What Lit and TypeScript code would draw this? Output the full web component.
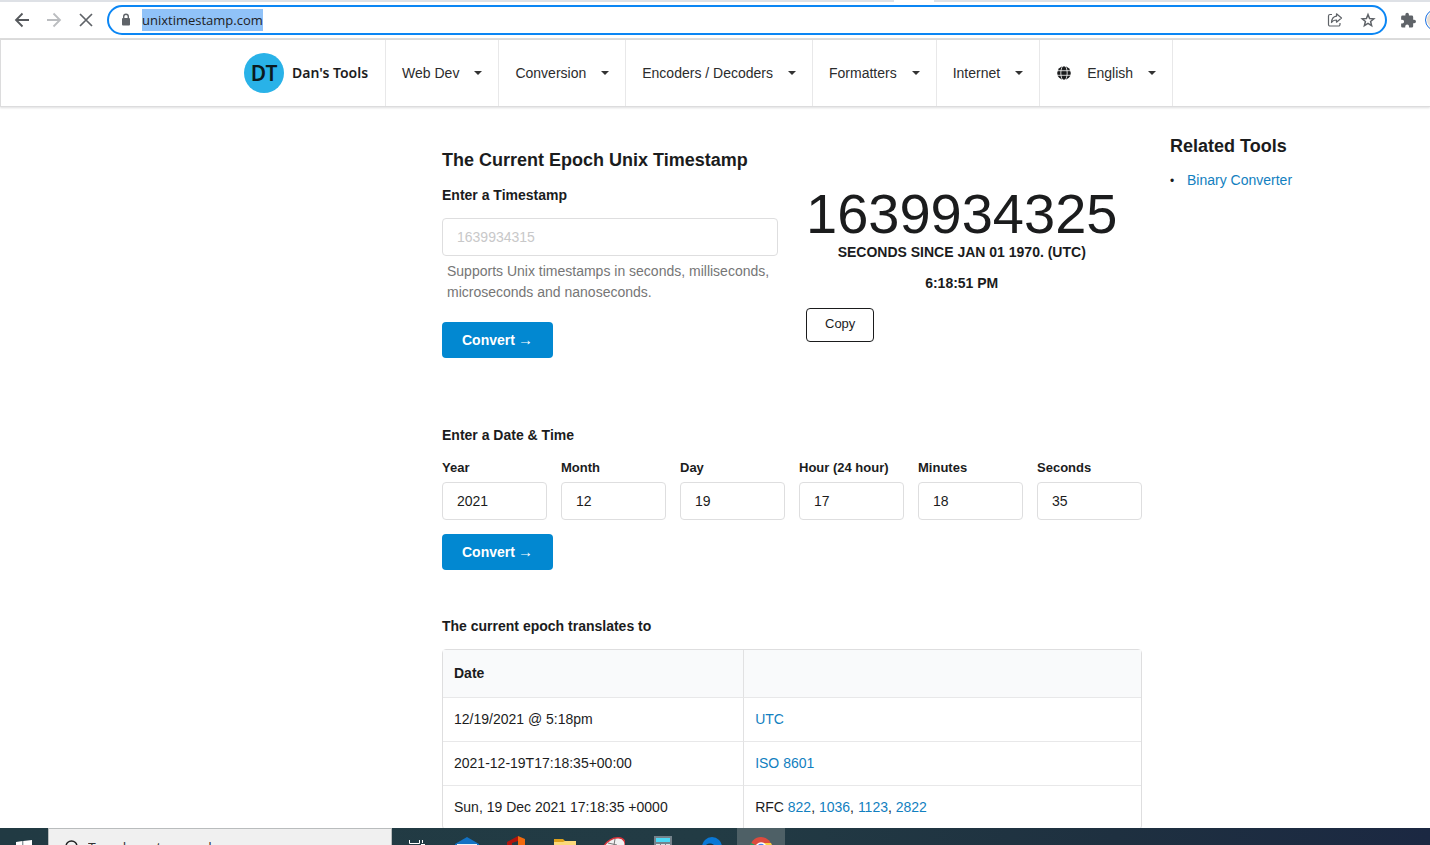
import { LitElement, html, css, svg } from "lit";
import { customElement } from "lit/decorators.js";

const MENUS = ["Web Dev", "Conversion", "Encoders / Decoders", "Formatters", "Internet"];

const FIELDS = [
  { id: "year", label: "Year", value: "2021" },
  { id: "month", label: "Month", value: "12" },
  { id: "day", label: "Day", value: "19" },
  { id: "hour", label: "Hour (24 hour)", value: "17" },
  { id: "minutes", label: "Minutes", value: "18" },
  { id: "seconds", label: "Seconds", value: "35" },
];

const ROWS = [
  { date: "12/19/2021 @ 5:18pm", format: html`<a href="#">UTC</a>` },
  { date: "2021-12-19T17:18:35+00:00", format: html`<a href="#">ISO 8601</a>` },
  {
    date: "Sun, 19 Dec 2021 17:18:35 +0000",
    format: html`RFC <a href="#">822</a>, <a href="#">1036</a>, <a href="#">1123</a>, <a href="#">2822</a>`,
  },
];

@customElement("browser-bar")
class BrowserBar extends LitElement {
  static styles = css`
    :host {
      display: flex;
      align-items: center;
      flex: none;
      height: 36px;
      gap: 8px;
      padding-top: 2px;
      padding-left: 10px;
      overflow: hidden;
      border-bottom: 2px solid #dcdcdc;
      background: linear-gradient(90deg, #dee1e6 62.5%, #fff 62.5% 65.3%, #dee1e6 65.3%) top / 100% 2px no-repeat #fff;
    }
    .tool {
      display: flex;
      align-items: center;
      justify-content: center;
      flex: none;
      width: 24px;
      height: 24px;
      padding: 0;
      border: 0;
      background: none;
    }
    svg {
      display: block;
    }
    .address {
      display: flex;
      align-items: center;
      flex: 1;
      gap: 9px;
      height: 26px;
      margin-left: 1px;
      padding: 0 5px 0 10px;
      border: 2px solid #0b86f4;
      border-radius: 15px;
    }
    .url {
      flex: 1;
      font: 13px/22px "Open Sans", "Noto Sans", sans-serif;
      color: #202124;
    }
    .picked {
      display: inline-block;
      background: #90c2f8;
    }
    .profile {
      flex: none;
      box-sizing: border-box;
      width: 22px;
      height: 22px;
      margin-left: -2px;
      margin-right: -17px;
      border: 1px solid #1a73e8;
      border-radius: 50%;
      background: #e9ddd2;
      box-shadow: inset 0 0 0 1px #fff;
    }
  `;
  render() {
    return html`
      <button class="tool" aria-label="Back">
        <svg width="16" height="16" viewBox="0 0 16 16" fill="none" stroke="#55585c" stroke-width="1.800"><path d="M15 8H2M8.500 1.500L2 8l6.500 6.500" /></svg>
      </button>
      <button class="tool" aria-label="Forward">
        <svg width="16" height="16" viewBox="0 0 16 16" fill="none" stroke="#bbbdc0" stroke-width="1.800"><path d="M1 8h13M7.500 1.500L14 8l-6.500 6.500" /></svg>
      </button>
      <button class="tool" aria-label="Stop loading">
        <svg width="14" height="14" viewBox="0 0 14 14" fill="none" stroke="#5f6368" stroke-width="1.700"><path d="M1 1l12 12M13 1L1 13" /></svg>
      </button>
      <div class="address">
        <svg width="14" height="14" viewBox="0 0 14 14"><rect x="3" y="5" width="8" height="7.500" rx="1" fill="#5f6368" /><path d="M4.700 5.500V3.600a2.300 2.300 0 0 1 4.600 0v1.900" fill="none" stroke="#5f6368" stroke-width="1.400" /></svg>
        <span class="url"><span class="picked">unixtimestamp.com</span></span>
        <button class="tool" aria-label="Share">
          <svg width="16" height="16" viewBox="0 0 16 16" fill="none" stroke="#5f6368" stroke-width="1.200" stroke-linejoin="round"><path d="M5 2.500H3a1.500 1.500 0 0 0-1.500 1.500v8.500A1.500 1.500 0 0 0 3 14h8.500a1.500 1.500 0 0 0 1.500-1.500V11" /><path d="M9.500 1.800L14.500 6l-5 4.200V8C7 8 5.600 8.700 4.500 10.500 4.700 7 6.300 4.700 9.500 4.200z" /></svg>
        </button>
        <button class="tool" aria-label="Bookmark">
          <svg width="16" height="16" viewBox="0 0 16 16" fill="none" stroke="#5f6368" stroke-width="1.500"><path d="M8 2.600l1.600 3.900 4.200.3-3.200 2.700 1 4.100L8 11.400l-3.600 2.200 1-4.100-3.200-2.700 4.200-.3z" /></svg>
        </button>
      </div>
      <button class="tool" aria-label="Extensions">
        <svg width="17" height="17" viewBox="-1 0 24 24" fill="#5f6368"><path d="M20.500 11H19V7a2 2 0 0 0-2-2h-4V3.500a2.500 2.500 0 0 0-5 0V5H4a2 2 0 0 0-2 2v3.800h1.500a2.700 2.700 0 0 1 0 5.400H2V20a2 2 0 0 0 2 2h3.800v-1.500a2.700 2.700 0 0 1 5.400 0V22H17a2 2 0 0 0 2-2v-4h1.500a2.500 2.500 0 0 0 0-5z" /></svg>
      </button>
      <span class="profile"></span>
    `;
  }
}

@customElement("site-header")
class SiteHeader extends LitElement {
  static styles = css`
    :host {
      display: flex;
      flex: none;
      height: 66px;
      padding-left: 17%;
      border: 1px solid #dcdcdd;
      border-top: 0;
      border-right: 0;
      background: #fff;
      box-shadow: 0 1px 2px rgba(34, 36, 38, 0.15);
      font: 14px/18px "Liberation Sans", Arial, sans-serif;
    }
    .brand {
      display: flex;
      align-items: center;
      gap: 8px;
      padding-right: 17px;
      border-right: 1px solid #e8e8e9;
      color: #1b1c1d;
      font-family: "Noto Sans", "Open Sans", sans-serif;
      font-weight: 600;
      text-decoration: none;
    }
    .logo {
      width: 40px;
      border-radius: 50%;
      background: #29b2e8;
      color: #0b1a20;
      font-size: 21px;
      line-height: 40px;
      text-align: center;
    }
    .menus {
      display: flex;
    }
    .menu {
      display: flex;
      align-items: center;
      gap: 15px;
      padding: 0 16px;
      border: 0;
      border-right: 1px solid #e8e8e9;
      background: none;
      color: #2b2c2d;
      font: inherit;
    }
    .globe {
      margin: 0 1px;
    }
  `;
  private caret = svg`<svg width="8" height="4" viewBox="0 0 8 4"><path d="M0 0h8L4 4z" fill="#333" /></svg>`;
  render() {
    return html`
      <a class="brand" href="#"><span class="logo">DT</span><span>Dan's Tools</span></a>
      <nav class="menus">
        ${MENUS.map((name) => html`<button class="menu">${name}${this.caret}</button>`)}
        <button class="menu">
          <svg class="globe" width="14" height="14" viewBox="0 0 14 14"><circle cx="7" cy="7" r="6.800" fill="#1b1c1d" /><path d="M0 4.700h14M0 9.300h14" stroke="#fff" stroke-width=".8" fill="none" /><ellipse cx="7" cy="7" rx="3.200" ry="7.500" fill="none" stroke="#fff" stroke-width=".8" /></svg>
          English${this.caret}
        </button>
      </nav>
    `;
  }
}

@customElement("task-bar")
class TaskBar extends LitElement {
  static styles = css`
    :host {
      display: flex;
      flex: none;
      height: 17px;
      overflow: hidden;
      background: linear-gradient(90deg, #213a43 0%, #223b44 50%, #1e3040 78%, #1b2842 100%);
    }
    .apps {
      display: flex;
      gap: 1px;
      padding-left: 2px;
    }
    .item {
      display: flex;
      justify-content: center;
      width: 48px;
      height: 40px;
      padding: 8px 0;
      border: 0;
      background: none;
      box-sizing: border-box;
    }
    .start {
      padding-top: 12px;
    }
    .active {
      background: #4e6066;
    }
    .search {
      display: flex;
      align-items: center;
      gap: 9px;
      box-sizing: border-box;
      width: 344px;
      height: 40px;
      padding-left: 16px;
      border: 1px solid #b9bcbd;
      background: #f0f0f0;
    }
    input {
      flex: 1;
      min-width: 0;
      padding: 0;
      border: 0;
      background: none;
      font: 14px/20px "Open Sans", "Noto Sans", sans-serif;
    }
    input::placeholder {
      color: #333;
      opacity: 1;
    }
  `;
  render() {
    return html`
      <button class="item start" aria-label="Start"><svg width="16" height="16" viewBox="0 0 16 16" fill="#fff"><path d="M0 2l6.500-1v6.500H0zM7.200 .9L16 0v7.500H7.200zM0 8.300h6.500V15L0 14zM7.200 8.300H16V16l-8.800-1z" /></svg></button>
      <label class="search">
        <svg width="14" height="16" viewBox="0 0 14 16" fill="none" stroke="#222" stroke-width="1.400"><circle cx="6.500" cy="6.500" r="5.500" /><path d="M3.500 11L.5 15" /></svg>
        <input placeholder="Type here to search" aria-label="Search" />
      </label>
      <div class="apps">
        <button class="item" aria-label="Task view"><svg width="20" height="20" viewBox="0 0 20 20" fill="none" stroke="#fff"><path d="M1.500 4v3.500h10V4M1.500 19v-2.500h10V19M1.500 9.500h10v5h-10zM14.500 4v3M14.500 10v9M13 8.500h4" /></svg></button>
        <button class="item" aria-label="Mail"><svg width="26" height="24" viewBox="0 0 26 24"><path d="M1 8L13 1l12 7v14H1z" fill="#1272c4" /><path d="M3 8h20v3l-10 6L3 11z" fill="#f0f4f8" /></svg></button>
        <button class="item" aria-label="Office"><svg width="20" height="24" viewBox="0 0 20 24"><path d="M12 0L1 6v12l5-3V7l6-2z" fill="#b3140c" /><path d="M12 0l7 3v18l-7 3V5z" fill="#f26a0d" /></svg></button>
        <button class="item" aria-label="File Explorer"><svg width="22" height="24" viewBox="0 0 22 24"><path d="M0 3h9l2 2h11v17H0z" fill="#dda11c" /><path d="M0 6h9l2-1h11v17H0z" fill="#fbd97a" /></svg></button>
        <button class="item" aria-label="Snipping Tool"><svg width="22" height="24" viewBox="0 0 22 24"><ellipse cx="11" cy="11" rx="12" ry="8" transform="rotate(-30 11 11)" fill="#f1f1f1" stroke="#d5333b" stroke-width="1.500" /><path d="M12 3l-2 12M5 7l9 2" stroke="#777" /></svg></button>
        <button class="item" aria-label="Calculator"><svg width="18" height="24" viewBox="0 0 18 24"><path d="M0 0h18v24H0z" fill="#75828b" /><path d="M2 2h14v4H2z" fill="#4dd8f5" /><path d="M2 8h4v3H2zM7 8h4v3H7zM12 8h4v3h-4z" fill="#dce2e5" /></svg></button>
        <button class="item" aria-label="Edge"><svg width="20" height="24" viewBox="0 0 20 24"><circle cx="10" cy="11" r="10" fill="#0a78d6" /><path d="M4 9c4-3 9-1 9 3H7z" fill="#1c3340" /></svg></button>
        <button class="item active" aria-label="Chrome"><svg width="22" height="24" viewBox="0 0 22 24"><circle cx="11" cy="12" r="11" fill="#dd4b3e" /><path d="M1 7a11 11 0 0 0 9 16l2-11z" fill="#1da261" /><path d="M21 7H11l3 16a11 11 0 0 0 7-16z" fill="#fdce44" /><circle cx="11" cy="12" r="5" fill="#4a86ee" stroke="#fff" stroke-width="1.500" /></svg></button>
      </div>
    `;
  }
}

@customElement("app-root")
class AppRoot extends LitElement {
  static styles = css`
    :host {
      display: flex;
      flex-direction: column;
      height: 100vh;
      overflow: hidden;
      background: #fff;
      color: #1b1c1d;
      font: 14px/20px "Liberation Sans", Arial, sans-serif;
    }
    .page {
      display: grid;
      grid-template-columns: 428fr 728fr 274fr;
      flex: 1;
      min-height: 0;
      overflow: hidden;
    }
    .content {
      grid-column: 2;
      padding: 42px 14px 0;
    }
    h1,
    h2,
    h3,
    p {
      margin: 0;
    }
    h1,
    .aside-title {
      font-size: 18px;
      line-height: 22px;
    }
    h2 {
      font-size: 14px;
      line-height: 20px;
    }
    a {
      color: #1280c0;
      text-decoration: none;
    }
    .split {
      display: grid;
      grid-template-columns: 1fr 1fr;
      gap: 28px;
      margin-top: 14px;
    }
    .label {
      display: block;
      margin-bottom: 13px;
      font-weight: 700;
    }
    .field {
      box-sizing: border-box;
      width: 100%;
      height: 38px;
      padding: 0 14px;
      border: 1px solid #dededf;
      border-radius: 4px;
      background: #fff;
      color: #1b1c1d;
      font: inherit;
    }
    .field::placeholder {
      color: #c8c8c9;
      opacity: 1;
    }
    .hint {
      padding: 5px 4px 0 5px;
      color: #767676;
      line-height: 21px;
    }
    .convert {
      display: flex;
      align-items: center;
      gap: 3px;
      height: 36px;
      padding: 0 20px;
      border: 0;
      border-radius: 4px;
      background: #0288d1;
      color: #fff;
      font: 700 14px/20px "Liberation Sans", Arial, sans-serif;
    }
    .arrow {
      font-family: "Liberation Serif", serif;
      font-size: 15px;
      font-weight: 400;
    }
    .first {
      margin-top: 19px;
    }
    .clock {
      width: fit-content;
      padding-top: 1px;
      text-align: center;
      font-weight: 700;
    }
    .epoch {
      font-size: 56px;
      line-height: 56px;
      font-weight: 400;
    }
    .time {
      margin-top: 11px;
    }
    .copy {
      height: 34px;
      margin-top: 15px;
      padding: 0 18px 2px;
      border: 1px solid #1b1c1d;
      border-radius: 4px;
      background: #fff;
      color: #1b1c1d;
      font: inherit;
      font-size: 13px;
    }
    .date-title {
      margin-top: 67px;
    }
    .fields {
      display: grid;
      grid-template-columns: repeat(6, 1fr);
      gap: 14px;
      margin: 14px 0;
    }
    .small {
      display: block;
      margin-bottom: 5px;
      font-size: 13px;
      line-height: 18px;
      font-weight: 700;
    }
    .table-title {
      margin: 46px 0 13px;
    }
    table {
      width: 100%;
      border: 1px solid #dededf;
      border-radius: 4px;
      border-spacing: 0;
    }
    th,
    td {
      box-sizing: border-box;
      height: 44px;
      padding: 0 11px 2px;
      border-top: 1px solid #e8e8e9;
      text-align: left;
    }
    th {
      height: 47px;
      border-top: 0;
      background: #f9fafb;
    }
    .left {
      width: 43%;
    }
    .right {
      border-left: 1px solid #e1e1e2;
    }
    .aside {
      padding: 28px 14px 0;
    }
    .links {
      margin: 13px 0 0;
      padding-left: 17px;
      list-style: none;
    }
    .links li::before {
      content: "•";
      display: inline-block;
      width: 17px;
      margin-left: -17px;
      font-size: 12px;
    }
  `;
  private convert(extra = "") {
    return html`<button class="convert ${extra}"><span>Convert</span><span class="arrow">→</span></button>`;
  }
  render() {
    return html`
      <browser-bar></browser-bar>
      <site-header></site-header>
      <main class="page">
        <section class="content">
          <h1>The Current Epoch Unix Timestamp</h1>
          <div class="split">
            <div>
              <label class="label" for="stamp">Enter a Timestamp</label>
              <input class="field" id="stamp" placeholder="1639934315" />
              <p class="hint">Supports Unix timestamps in seconds, milliseconds, microseconds and nanoseconds.</p>
              ${this.convert("first")}
            </div>
            <div>
              <div class="clock">
                <div class="epoch">1639934325</div>
                <div>SECONDS SINCE JAN 01 1970. (UTC)</div>
                <div class="time">6:18:51 PM</div>
              </div>
              <button class="copy">Copy</button>
            </div>
          </div>
          <h2 class="date-title">Enter a Date &amp; Time</h2>
          <div class="fields">
            ${FIELDS.map(
              (f) => html`<div><label class="small" for=${f.id}>${f.label}</label><input class="field" id=${f.id} .value=${f.value} /></div>`
            )}
          </div>
          ${this.convert()}
          <h2 class="table-title">The current epoch translates to</h2>
          <table>
            <thead>
              <tr><th class="left">Date</th><th class="right"></th></tr>
            </thead>
            <tbody>
              ${ROWS.map((r) => html`<tr><td>${r.date}</td><td class="right">${r.format}</td></tr>`)}
            </tbody>
          </table>
        </section>
        <aside class="aside">
          <h3 class="aside-title">Related Tools</h3>
          <ul class="links"><li><a href="#">Binary Converter</a></li></ul>
        </aside>
      </main>
      <task-bar></task-bar>
    `;
  }
}
